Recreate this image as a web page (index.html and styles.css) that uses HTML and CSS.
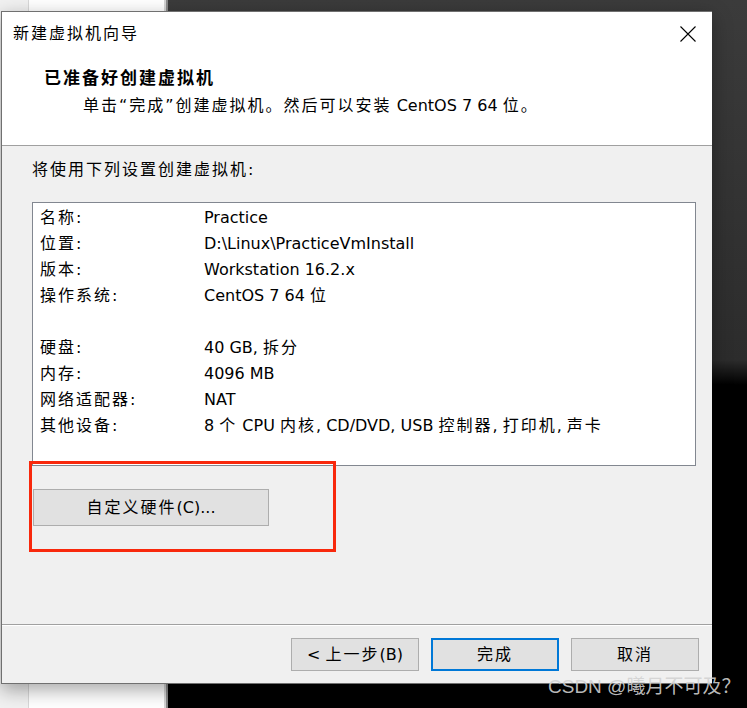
FILE: index.html
```html
<!DOCTYPE html>
<html lang="zh-CN">
<head>
<meta charset="utf-8">
<title>新建虚拟机向导</title>
<link rel="stylesheet" href="styles.css">
</head>
<body>
<div class="desk">
  <div class="dialog">
    <div class="top">
      <div class="titlebar">
        <span class="title cn">新建虚拟机向导</span>
        <svg class="close" width="16" height="16" viewBox="0 0 16 16"><path d="M0.5 0.5 L15.5 15.5 M15.5 0.5 L0.5 15.5" stroke="#000" stroke-width="1.1" fill="none"/></svg>
      </div>
      <div class="header">
        <div class="h1">已准备好创建虚拟机</div>
        <div class="h2"><span class="cn">单击“完成”创建虚拟机。然后可以安装</span> CentOS 7 64 <span class="cn">位。</span></div>
      </div>
    </div>
    <div class="body">
      <div class="intro cn">将使用下列设置创建虚拟机:</div>
      <div class="list">
        <div class="row"><span class="k cn">名称:</span><span class="v">Practice</span></div>
        <div class="row"><span class="k cn">位置:</span><span class="v">D:\Linux\PracticeVmInstall</span></div>
        <div class="row"><span class="k cn">版本:</span><span class="v">Workstation 16.2.x</span></div>
        <div class="row"><span class="k cn">操作系统:</span><span class="v">CentOS 7 64 <span class="cn">位</span></span></div>
        <div class="row"></div>
        <div class="row"><span class="k cn">硬盘:</span><span class="v">40 GB, <span class="cn">拆分</span></span></div>
        <div class="row"><span class="k cn">内存:</span><span class="v">4096 MB</span></div>
        <div class="row"><span class="k cn">网络适配器:</span><span class="v">NAT</span></div>
        <div class="row"><span class="k cn">其他设备:</span><span class="v">8 <span class="cn">个</span> CPU <span class="cn">内核</span>, CD/DVD, USB <span class="cn">控制器</span>, <span class="cn">打印机</span>, <span class="cn">声卡</span></span></div>
      </div>
      <div class="custom-wrap">
        <button class="btn custom"><span class="cn">自定义硬件</span>(C)...</button>
        <div class="annot"></div>
      </div>
    </div>
    <div class="footer">
      <button class="btn fbtn">&lt; <span class="cn">上一步</span>(B)</button>
      <button class="btn fbtn default"><span class="cn">完成</span></button>
      <button class="btn fbtn"><span class="cn">取消</span></button>
    </div>
  </div>
  <div class="watermark">CSDN @曦月不可及？</div>
</div>
</body>
</html>
```
FILE: styles.css
```css
* { box-sizing: border-box; }
html, body { margin: 0; padding: 0; }
body {
  width: 747px;
  height: 708px;
  overflow: hidden;
  font: 16px "DejaVu Sans", "Noto Sans CJK SC", sans-serif;
  color: #000;
}
.cn { letter-spacing: 2px; }

.desk {
  position: relative;
  width: 747px;
  height: 708px;
  padding: 11px 0 0 1px;
  background:
    linear-gradient(to right, #f1f1f1 0 28px, #d8d8d8 28px 29px, #fff 29px 164px, #d4d4d4 164px 166px, #8a8a8a 166px 168px, transparent 168px),
    linear-gradient(to bottom, #3b3b3b 0, #2c2c2c 360px, #000 385px, #000 100%);
}

.dialog {
  width: 711px;
  height: 673px;
  border: 1px solid #707070;
  border-right: none;
  background: #f0f0f0;
  box-shadow: 0 6px 18px rgba(0, 0, 0, 0.35);
  display: flex;
  flex-direction: column;
}

.top {
  height: 134px;
  background: #fff;
  border-bottom: 1px solid #a0a0a0;
}
.titlebar {
  height: 44px;
  display: flex;
  align-items: center;
  justify-content: space-between;
  padding: 0 16px 0 11px;
}
.title { line-height: 44px; }
.close { display: block; }

.header { padding: 11px 0 0 42px; }
.h1 {
  font-weight: bold;
  font-size: 17px;
  line-height: 22px;
  letter-spacing: 2px;
}
.h2 {
  margin-top: 5px;
  padding-left: 39px;
  line-height: 23px;
}

.body {
  height: 478px;
  padding: 14px 0 0 30px;
}
.intro { line-height: 20px; }
.list {
  margin-top: 22px;
  width: 664px;
  height: 264px;
  border: 1px solid #828790;
  background: #fff;
  padding: 2px 0 0 7px;
}
.row {
  display: flex;
  height: 26px;
  line-height: 26px;
  white-space: nowrap;
}
.k { width: 164px; flex: none; }

.custom-wrap {
  position: relative;
  margin: 23px 0 0 1px;
  width: 236px;
}
.btn {
  display: block;
  font: inherit;
  color: #000;
  background: #e1e1e1;
  border: 1px solid #adadad;
  padding: 0;
  margin: 0;
  text-align: center;
  white-space: pre;
}
.custom { width: 236px; height: 37px; line-height: 35px; }
.annot {
  position: absolute;
  left: -4px;
  top: -28px;
  width: 307px;
  height: 91px;
  border: 3px solid #f8280c;
  pointer-events: none;
}

.footer {
  height: 59px;
  border-top: 1px solid #a0a0a0;
  box-shadow: inset 0 1px 0 #fff;
  padding: 13px 13px 0 0;
  display: flex;
  justify-content: flex-end;
  align-items: flex-start;
  gap: 12px;
}
.fbtn { width: 128px; height: 33px; line-height: 30px; }
.default { border: 2px solid #0078d7; line-height: 28px; }

.watermark {
  position: absolute;
  left: 548px;
  top: 677px;
  font: 19px "Liberation Sans", "Noto Sans CJK SC", sans-serif;
  line-height: 20px;
  color: rgba(210, 210, 210, 0.9);
  white-space: nowrap;
}
```
